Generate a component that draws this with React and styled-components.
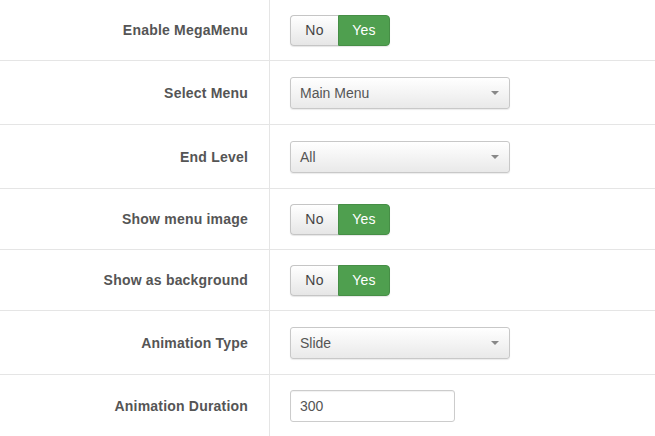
import styled, { createGlobalStyle } from "styled-components"

const Global = createGlobalStyle`
    body {
        margin: 0;
        background: #fff;
        font-family: "Liberation Sans", Arial, sans-serif;
    }
`
const Form = styled.div`
    display: flex;
    flex-direction: column;
    width: 655px;
`
const Row = styled.div`
    box-sizing: border-box;
    display: grid;
    grid-template-columns: 270px 1fr;
    border-top: ${p => p.$first ? "none" : "1px solid #e5e5e5"};
    height: ${p => p.$h}px;
`
const Label = styled.div`
    display: flex;
    align-items: center;
    justify-content: flex-end;
    padding-right: 21px;
    border-right: 1px solid #e5e5e5;
    font-size: 14px;
    letter-spacing: 0.2px;
    font-weight: bold;
    color: #555;
`
const Control = styled.div`
    display: flex;
    align-items: center;
    padding-left: 20px;
`
const Toggle = styled.div`
    display: flex;
    height: 31px;
    border-radius: 4px;
    box-shadow: 0 1px 1px rgba(0,0,0,0.1);
`
const ToggleBtn = styled.div`
    box-sizing: border-box;
    display: flex;
    align-items: center;
    justify-content: center;
    width: ${p => p.$w}px;
    font-size: 14px;
    letter-spacing: 0.3px;
    color: ${p => p.$on ? "#fff" : "#444"};
    background: ${p => p.$on ? "#4f9f4f" : "linear-gradient(#fff, #e6e6e6)"};
    border: 1px solid ${p => p.$on ? "#468e46" : "#c5c5c5"};
    border-right: ${p => p.$on ? "" : "none"};
    border-radius: ${p => p.$on ? "0 4px 4px 0" : "4px 0 0 4px"};
`
const Select = styled.div`
    box-sizing: border-box;
    display: flex;
    align-items: center;
    justify-content: space-between;
    width: 220px;
    height: 32px;
    padding: 0 10px 0 9px;
    border: 1px solid #c8c8c8;
    border-radius: 3px;
    background: linear-gradient(#fff, #e9e9e9);
    box-shadow: 0 1px 1px rgba(0,0,0,0.08);
    font-size: 14px;
    color: #555;
`
const Caret = styled.span`
    width: 0;
    height: 0;
    border-left: 4px solid transparent;
    border-right: 4px solid transparent;
    border-top: 4px solid #888;
    margin-top: 1px;
`
const Input = styled.div`
    box-sizing: border-box;
    display: flex;
    align-items: center;
    width: 165px;
    height: 32px;
    padding: 0 9px;
    border: 1px solid #ccc;
    border-radius: 3px;
    box-shadow: inset 0 1px 1px rgba(0,0,0,0.06);
    font-size: 14px;
    color: #555;
`

const YesNo = () => (
    <Toggle>
        <ToggleBtn $w={48}>No</ToggleBtn>
        <ToggleBtn $w={52} $on>Yes</ToggleBtn>
    </Toggle>
)

const Dropdown = ({ value }) => (
    <Select>{value}<Caret /></Select>
)

const rows = [
    { label: "Enable MegaMenu", h: 60, el: <YesNo /> },
    { label: "Select Menu", h: 64, el: <Dropdown value="Main Menu" /> },
    { label: "End Level", h: 64, el: <Dropdown value="All" /> },
    { label: "Show menu image", h: 61, el: <YesNo /> },
    { label: "Show as background", h: 61, el: <YesNo /> },
    { label: "Animation Type", h: 64, el: <Dropdown value="Slide" /> },
    { label: "Animation Duration", h: 62, el: <Input>300</Input> },
]

const App = () => (
    <>
        <Global />
        <Form>
            {rows.map((r, i) =>
                <Row key={r.label} $first={i === 0} $h={r.h}>
                    <Label>{r.label}</Label>
                    <Control>{r.el}</Control>
                </Row>
            )}
        </Form>
    </>
)

export default App
